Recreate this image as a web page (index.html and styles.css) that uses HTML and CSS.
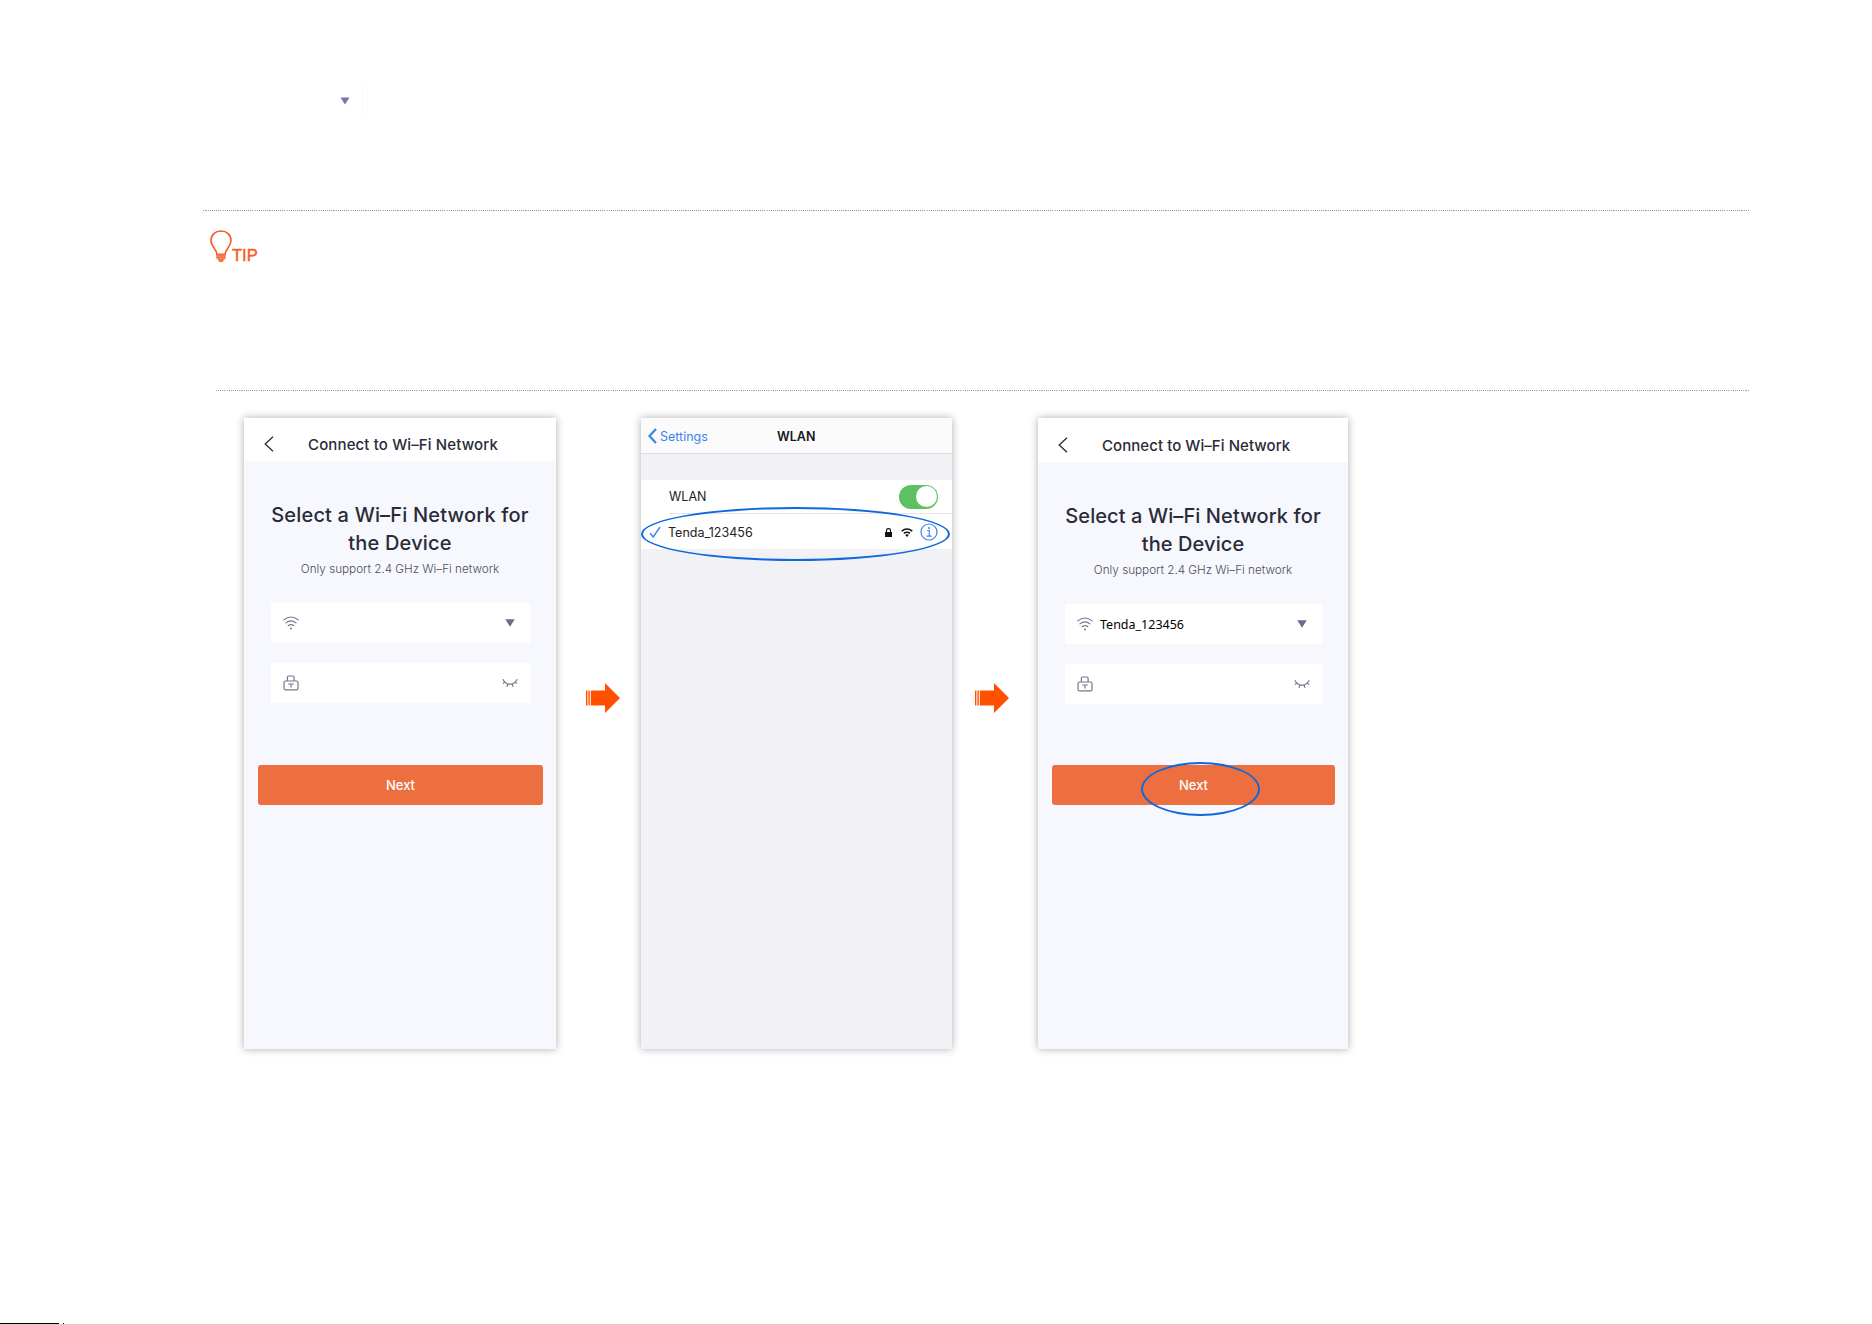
FILE: index.html
```html
<!DOCTYPE html>
<html lang="en">
<head>
    <meta charset="UTF-8">
    <meta name="viewport" content="width=device-width, initial-scale=1.0">
    <title>Connect to Wi-Fi Network</title>
    <link rel="stylesheet" href="styles.css">
</head>
<body>
    <!-- shared icons -->
    <svg class="defs" width="0" height="0">
        <symbol id="back" viewBox="0 0 10 16"><path d="M9 .8 1.2 8 9 15.2" fill="none" stroke="#2a2b38" stroke-width="1.3"/></symbol>
        <symbol id="wifi" viewBox="0 0 16 14">
            <g fill="none" stroke="#77768f" stroke-width="1.2" stroke-linecap="round">
                <path d="M.8 3.9Q8-1.9 15.2 3.9M3 6.9Q8 2.7 13 6.9M5.2 9.7Q8 7.5 10.8 9.7"/>
            </g>
            <circle cx="8" cy="12.4" r="1" fill="#77768f"/>
        </symbol>
        <symbol id="lock" viewBox="0 0 16 16">
            <g fill="none" stroke="#77768f" stroke-width="1.2">
                <rect x="1" y="6" width="14" height="8.8" rx="1.6"/>
                <path d="M4.4 6V2.3Q4.4 1 5.7 1h4.1q1.3 0 1.3 1.3V6M5.2 9h5.6M8 9v3.5"/>
            </g>
        </symbol>
        <symbol id="eye" viewBox="0 0 16 10">
            <path d="M.8 1.2Q3.5 6.2 8 6.2T15.2 1.2M3 4.3.8 5.6M5.9 6 4.9 8.7M10.1 6l1 2.7M13 4.3l2.2 1.3" fill="none" stroke="#77768f" stroke-width="1.2"/>
        </symbol>
        <symbol id="caret" viewBox="0 0 10 8"><path d="M.3.3h9.4L5 7.8z" fill="#6c6b90"/></symbol>
        <symbol id="arrow" viewBox="0 0 34 30"><path d="M0 7.5h1.4v15H0zM2.4 7.5h1.4v15H2.4zM4.8 7.5H19V0l15 15-15 15v-7.5H4.8z" fill="#ff5000"/></symbol>
    </svg>

    <div class="page">
        <div class="marker">
            <svg class="marker-caret" viewBox="0 0 10 8"><path d="M.5.5h9L5 7.5z" fill="#7478ac"/></svg>
            <span class="marker-edge"></span>
        </div>

        <svg class="divider"><line x1="0" y1=".5" x2="1546" y2=".5"/></svg>
        <div class="tip">
            <svg class="bulb" viewBox="0 0 22 32">
                <path d="M7 24.4C6.9 19 1 17 1 10.5 1 5 5.2 1 11 1s10 4 10 9.5c0 6.5-5.9 8.5-6 13.9z" fill="none" stroke="#f75a1e" stroke-width="1.6"/>
                <path d="M6.3 24h9.4v4.5l-1.8 1.2-1.2 2.2H9.3l-1.2-2.2-1.8-1.2z" fill="#f4713f"/>
                <path d="M6.5 26.3h9M6.8 28.6h8.4" stroke="#f9a283" stroke-width=".5"/>
            </svg>
            <span class="tip-label">TIP</span>
        </div>
        <svg class="divider divider-short"><line x1="0" y1=".5" x2="1533" y2=".5"/></svg>

        <div class="steps">
            <div class="phone">
                <div class="app-header">
                    <svg class="back"><use href="#back"/></svg>
                    <span class="app-title">Connect to Wi–Fi Network</span>
                </div>
                <h1>Select a Wi–Fi Network for<br>the Device</h1>
                <p class="hint">Only support 2.4 GHz Wi–Fi network</p>
                <div class="field">
                    <svg class="wifi"><use href="#wifi"/></svg>
                    <span class="value"></span>
                    <svg class="caret"><use href="#caret"/></svg>
                </div>
                <div class="field">
                    <svg class="lock"><use href="#lock"/></svg>
                    <span class="value"></span>
                    <svg class="eye"><use href="#eye"/></svg>
                </div>
                <div class="next">Next</div>
            </div>

            <svg class="arrow arrow-first"><use href="#arrow"/></svg>

            <div class="phone phone-wlan">
                <div class="ios-header">
                    <svg class="ios-back" viewBox="0 0 9 16"><path d="M8 1 1.5 8 8 15" fill="none" stroke="#3d83ea" stroke-width="2.2"/></svg>
                    <span class="ios-settings">Settings</span>
                    <span class="ios-title">WLAN</span>
                </div>
                <div class="ios-list">
                    <div class="ios-row">
                        <span class="ios-text">WLAN</span>
                        <span class="toggle"></span>
                    </div>
                    <div class="ios-row ios-network">
                        <svg class="check" viewBox="0 0 12 12"><path d="M1 7.2 4.2 11 11 1" fill="none" stroke="#4a8cec" stroke-width="1.6"/></svg>
                        <span class="ios-text">Tenda_123456</span>
                        <svg class="ios-lock" viewBox="0 0 7 9"><path d="M0 4h7v5H0z" fill="#111"/><path d="M1.5 4.5v-2a2 1.900 0 0 1 4 0v2" fill="none" stroke="#111" stroke-width="1.1"/></svg>
                        <svg class="ios-wifi" viewBox="0 0 12 9"><path d="M.7 3.2Q6-1 11.3 3.2M2.9 5.4Q6 3 9.1 5.4" fill="none" stroke="#111" stroke-width="1.5"/><path d="M4.2 7Q6 5.6 7.8 7L6 9z" fill="#111"/></svg>
                        <svg class="info" viewBox="0 0 18 18"><circle cx="9" cy="9" r="8" fill="none" stroke="#3d83ea" stroke-width="1.2"/><path d="M7 7.5h2.3V13M6.7 13.2h5" fill="none" stroke="#3d83ea" stroke-width="1.2"/><circle cx="9" cy="4.9" r="1" fill="#3d83ea"/></svg>
                    </div>
                </div>
                <span class="ring ring-network"></span>
            </div>

            <svg class="arrow arrow-second"><use href="#arrow"/></svg>

            <div class="phone phone-done">
                <div class="app-header">
                    <svg class="back"><use href="#back"/></svg>
                    <span class="app-title">Connect to Wi–Fi Network</span>
                </div>
                <h1>Select a Wi–Fi Network for<br>the Device</h1>
                <p class="hint">Only support 2.4 GHz Wi–Fi network</p>
                <div class="field">
                    <svg class="wifi"><use href="#wifi"/></svg>
                    <span class="value">Tenda_123456</span>
                    <svg class="caret"><use href="#caret"/></svg>
                </div>
                <div class="field">
                    <svg class="lock"><use href="#lock"/></svg>
                    <span class="value"></span>
                    <svg class="eye"><use href="#eye"/></svg>
                </div>
                <div class="next">Next</div>
                <span class="ring ring-next"></span>
            </div>
        </div>

        <div class="footer-line"><span></span></div>
    </div>
</body>
</html>
```
FILE: styles.css
```css
:root {
    --ink: #2a2b38; --app-bg: #f7f8fd; --ios-bg: #f1f1f6;
    --orange: #ed6f40; --ios-blue: #3d83ea; --ring: #0f68dc;
}
* { box-sizing: border-box; }
body { margin: 0; background: #fff; font-family: Inter, "Liberation Sans", sans-serif; color: var(--ink); }
svg { display: block; flex: none; }
.defs { position: absolute; }
.page { width: 1872px; height: 1324px; display: flex; flex-direction: column; overflow: hidden; }

.marker { display: flex; height: 210px; padding: 84px 0 0 340px; }
.marker-caret { width: 10px; height: 8px; margin-top: 13px; }
.marker-edge { width: 1px; height: 34px; margin-left: 12px; background: #fafafe; }

.divider { width: 1546px; height: 1px; margin-left: 203px; }
.divider line { stroke: #9c9c9c; stroke-width: 1; stroke-dasharray: 1 1 1 1 1 1 1 1 1 1 1 1 1 1 2 1 1 1 1 1 1 1 1 1 1 1 1 1 1 2; stroke-dashoffset: 12; shape-rendering: crispEdges; }
.divider-short { width: 1533px; margin-left: 216px; }
.divider-short line { stroke-dashoffset: 21; }
.tip { display: flex; height: 179px; padding: 19px 0 0 210px; }
.bulb { width: 22px; height: 32px; }
.tip-label { margin-top: 16px; font: 16.5px/19px "Liberation Sans", sans-serif; color: #f75a1e; -webkit-text-stroke: .4px #f75a1e; }

.steps { display: flex; align-items: flex-start; padding: 27px 0 0 244px; }
.arrow { width: 34px; height: 30px; margin-top: 265px; }
.arrow-first { margin-left: 30px; margin-right: 21px; }
.arrow-second { margin-left: 23px; margin-right: 29px; }

.phone { position: relative; flex: none; width: 312px; height: 631px; background: var(--app-bg); box-shadow: 0 0 8px rgba(0, 0, 0, .32); }
.phone-wlan { width: 311px; background: var(--ios-bg); }
.phone-done { width: 310px; }

.app-header { display: flex; height: 43px; padding-left: 20px; background: #fff; }
.back { width: 10px; height: 16px; margin-top: 18px; }
.app-title { margin: 17px 0 0 34px; font-size: 15px; line-height: 20px; font-weight: 500; letter-spacing: .13px; white-space: nowrap; }
h1 { margin: 40px 0 0; font-size: 20px; line-height: 28px; font-weight: 500; text-align: center; letter-spacing: .18px; white-space: nowrap; }
.hint { margin: 2px 0 24px; font-size: 11.7px; line-height: 20px; height: 20px; text-align: center; color: #4b4c60; font-weight: 300; white-space: nowrap; }
.field { display: flex; align-items: center; height: 40px; margin: 0 26px 20px 27px; padding: 0 12px; background: #fff; }
.wifi { width: 16px; height: 14px; }
.lock { width: 16px; height: 16px; }
.caret { width: 10px; height: 8px; margin-right: 3px; }
.eye { width: 16px; height: 10px; }
.value { flex: 1; padding: 2px 0 0 7px; font: 12.5px/18px "Noto Sans", sans-serif; color: #000; }
.next { height: 40px; margin: 62px 13px 0 14px; border-radius: 3px; background: var(--orange); color: #fff; font-size: 13px; line-height: 40px; font-weight: 500; text-align: center; }

.phone-done .app-header { height: 44px; padding-top: 1px; }
.phone-done .app-title { letter-spacing: .06px; }
.phone-done h1 { letter-spacing: .1px; }
.phone-done .next { margin-top: 61px; }

.ios-header { display: flex; height: 36px; padding: 10px 0 0 7px; background: #fbfbfb; border-bottom: 1px solid #dcdce2; }
.ios-back { width: 9px; height: 16px; }
.ios-settings { width: 117px; margin-left: 3px; font-size: 12.5px; line-height: 18px; color: var(--ios-blue); }
.ios-title { font-size: 12.5px; line-height: 18px; font-weight: 600; color: #18181c; }
.ios-list { margin-top: 26px; background: #fff; }
.ios-row { display: flex; align-items: center; height: 34px; margin-left: 28px; padding-right: 14px; border-bottom: 1px solid #e6e6ea; }
.ios-text { flex: 1; font-size: 12.5px; color: #222; }
.toggle { width: 39px; height: 24px; padding: 1.5px; border-radius: 12px; background: #5fc062; }
.toggle::after { content: ""; display: block; width: 21px; height: 21px; margin-left: 15px; border-radius: 50%; background: #fff; }
.ios-network { height: 35px; margin-left: 0; padding: 1px 14px 0 8px; border-bottom: 0; }
.check { width: 12px; height: 12px; margin-right: 7px; }
.ios-lock { width: 7px; height: 9px; margin-right: 9px; }
.ios-wifi { width: 12px; height: 9px; margin-right: 7px; }
.info { width: 18px; height: 18px; }

/* hand-drawn highlights over the screens */
.ring { position: absolute; border: 2px solid var(--ring); border-radius: 50%; }
.ring-network { left: 0; top: 89px; width: 309px; height: 54px; }
.ring-next { left: 103px; top: 344px; width: 119px; height: 54px; }

.footer-line { display: flex; height: 1px; margin-top: auto; }
.footer-line::before { content: ""; width: 59px; background: #000; }
.footer-line span { width: 1px; margin-left: 4px; background: #000; }
```
